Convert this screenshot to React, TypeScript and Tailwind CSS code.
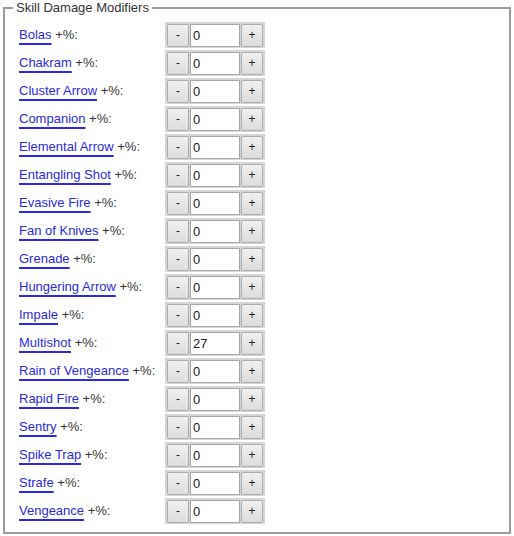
import React from 'react';

const skills: [string, string][] = [
    ['Bolas', '0'],
    ['Chakram', '0'],
    ['Cluster Arrow', '0'],
    ['Companion', '0'],
    ['Elemental Arrow', '0'],
    ['Entangling Shot', '0'],
    ['Evasive Fire', '0'],
    ['Fan of Knives', '0'],
    ['Grenade', '0'],
    ['Hungering Arrow', '0'],
    ['Impale', '0'],
    ['Multishot', '27'],
    ['Rain of Vengeance', '0'],
    ['Rapid Fire', '0'],
    ['Sentry', '0'],
    ['Spike Trap', '0'],
    ['Strafe', '0'],
    ['Vengeance', '0'],
];

function StepButton({ label }: { label: string }) {
    return (
        <button className="h-[23px] w-[22px] rounded-[2px] border border-[#acacac] bg-gradient-to-b from-[#f0f0f0] to-[#dddddd] text-[12px] leading-none text-[#222]">
            {label}
        </button>
    );
}

export default function App() {
    return (
        <div className="h-[536px] w-[514px] bg-white text-[13px] text-[#333] [font-family:'Liberation_Sans',Arial,sans-serif]">
            <fieldset className="mx-[3px] h-[534px] border-2 border-[#9c9c9c] px-[8px] pt-[7px]">
                <legend className="px-[3px] leading-[15px] text-[#333]">Skill Damage Modifiers</legend>
                <div className="flex flex-col gap-[2px] pl-[6px]">
                    {skills.map(([name, value]) => (
                        <div key={name} className="flex h-[26px] items-center">
                            <div className="w-[146px]">
                                <a href="#" className="text-[#2a2ae0] underline decoration-2 underline-offset-[4px]">{name}</a>
                                {' +%:'}
                            </div>
                            <div className="flex h-[26px] w-[100px] items-center gap-[1px] bg-[#d6d6d6] px-[2px]">
                                <StepButton label="-" />
                                <input
                                    readOnly
                                    value={value}
                                    className="h-[23px] w-[50px] border border-[#a8a8a8] bg-white px-[2px] text-[13px] text-[#222] outline-none"
                                />
                                <StepButton label="+" />
                            </div>
                        </div>
                    ))}
                </div>
            </fieldset>
        </div>
    );
}
